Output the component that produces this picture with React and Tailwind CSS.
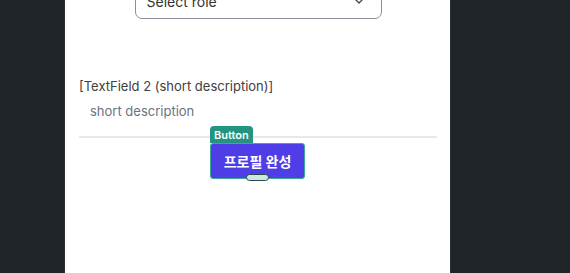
import React from "react";
import { ChevronDown } from "lucide-react";

function App() {
  return (
    <div
      className="flex h-[273px] w-[570px] overflow-hidden bg-[#1f2428]"
      style={{ fontFamily: "Inter, 'Noto Sans CJK KR', sans-serif" }}
    >
      <div className="ml-[64px] flex w-[387px] flex-col border-x border-[#2c3136] bg-white pl-[14px] pr-[13px]">
        {/* role select */}
        <div className="mt-[-17px] flex justify-center">
          <div className="flex h-[36px] w-[247px] items-center justify-between rounded-[7px] border border-[#8a9097] pl-[11px] pr-[14px] text-[14px] text-[#333]">
            <span>Select role</span>
            <ChevronDown size={16} strokeWidth={2} className="text-[#444]" />
          </div>
        </div>

        {/* text field */}
        <div className="mt-[59px] text-[13px] leading-[16px] text-[#404040]">
          [TextField 2 (short description)]
        </div>
        <div className="mt-[9px] pl-[11px] text-[13px] leading-[16px] text-[#6b7280]">
          short description
        </div>
        <div className="mt-[17px] h-[2px] bg-[#e6e8ec]" />

        {/* button */}
        <div className="mt-[-12px] flex flex-col pl-[131px]">
          <div className="flex">
            <span className="rounded-t-[4px] bg-[#24937f] px-[4px] pt-[2px] text-[11px] font-semibold leading-[15px] text-white">
              Button
            </span>
          </div>
          <div className="relative w-[95px]">
            <button className="flex h-[36px] w-[95px] items-center justify-center rounded-[3px] border border-[#3dab93] bg-[#4f3de8] text-[14px] font-bold text-white">
              프로필 완성
            </button>
            <span className="absolute bottom-[-2px] left-[36px] h-[7px] w-[23px] rounded-full border border-[#2b4a45] bg-[#cfe6e2]" />
          </div>
        </div>
      </div>
    </div>
  );
}

export default App;
